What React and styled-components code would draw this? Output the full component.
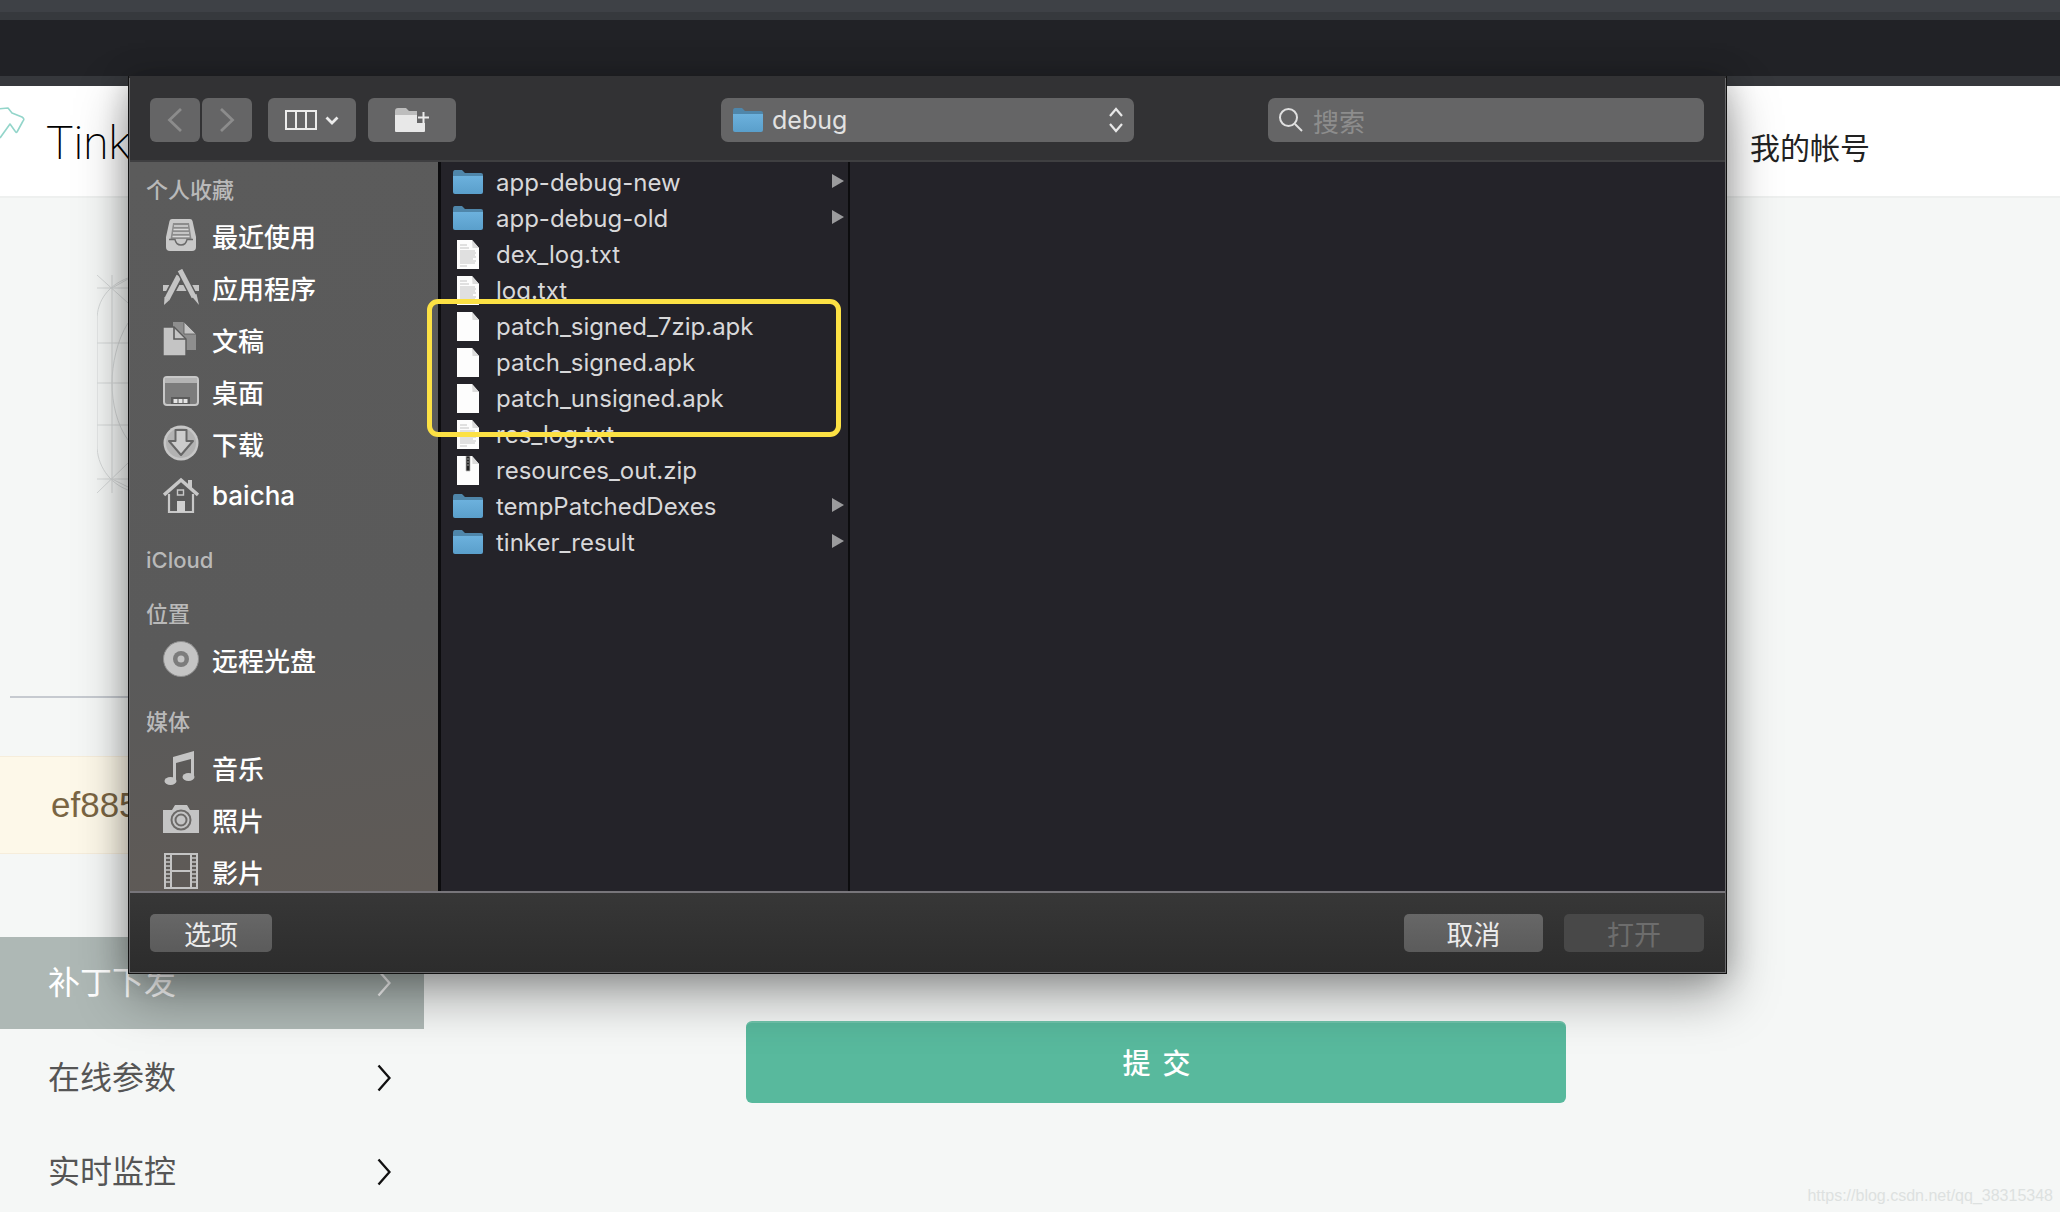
import React from 'react'
import styled, { createGlobalStyle } from 'styled-components'

const Global = createGlobalStyle`
  html, body {
    margin: 0;
    height: 100%;
    overflow: hidden;
    background: #f5f7f6;
  }
  * {
    box-sizing: border-box;
  }
`

const Page = styled.div`
  position: relative;
  width: 2060px;
  height: 1212px;
  overflow: hidden;
  background: #f5f7f6;
  font-family: 'Inter', 'Noto Sans CJK SC', sans-serif;
`

const TopStrip = styled.div`
  height: ${p => p.$h}px;
  background: ${p => p.$bg};
`

const Header = styled.header`
  height: 112px;
  background: #fff;
  border-bottom: 2px solid #eef0ef;
  display: flex;
  align-items: center;
  justify-content: space-between;
  padding: 0 190px 0 0;
`

const Brand = styled.div`
  display: flex;
  align-items: center;
  gap: 20px;
`

const LogoMark = styled.svg`
  margin-bottom: 34px;
`

const BrandName = styled.span`
  margin-top: 3px;
  font-family: 'Roboto', sans-serif;
  font-weight: 200;
  font-size: 46px;
  color: #000;
`

const Account = styled.span`
  margin-top: 9px;
  font-family: 'Noto Sans CJK SC', sans-serif;
  font-size: 30px;
  color: #222;
`

const Hero = styled.section`
  height: 498px;
  padding: 77px 0 0 97px;
`

const Divider = styled.div`
  height: 2px;
  width: 1000px;
  margin-left: 10px;
  background: #c6cad0;
`

const Notice = styled.div`
  margin-top: 58px;
  width: 1500px;
  height: 98px;
  padding-left: 51px;
  display: flex;
  align-items: center;
  background: #fdf8e9;
  border: 1px solid #f6eddb;
  border-left: none;
  font-family: 'Liberation Sans', sans-serif;
  font-size: 35px;
  color: #7a6543;
`

const Lower = styled.div`
  margin-top: 83px;
  display: grid;
  grid-template-columns: 424px 1fr;
`

const NavItem = styled.div`
  height: ${p => (p.$active ? 92 : 94)}px;
  margin-bottom: ${p => (p.$active ? 2 : 0)}px;
  padding: 0 33px 0 48px;
  display: flex;
  align-items: center;
  justify-content: space-between;
  background: ${p => (p.$active ? '#aeb8b5' : 'transparent')};
  color: ${p => (p.$active ? '#fff' : '#555')};
  font-family: 'Noto Sans CJK SC', sans-serif;
  font-size: 32px;
`

const NavLabel = styled.span`
  margin-top: -6px;
`

const Submit = styled.button`
  display: block;
  margin: 84px 0 0 322px;
  width: 820px;
  height: 82px;
  padding: 0 0 2px 13px;
  border: none;
  border-top: 2px solid #6fc4ab;
  border-radius: 6px;
  background: #58b99d;
  color: #fff;
  font-family: 'Noto Sans CJK SC', sans-serif;
  font-size: 28px;
  font-weight: 500;
  letter-spacing: 12px;
`

const Watermark = styled.span`
  position: absolute;
  right: 7px;
  bottom: 7px;
  font-family: 'Liberation Sans', sans-serif;
  font-size: 16px;
  color: #dde1e0;
`

const Dialog = styled.div`
  position: absolute;
  left: 128px;
  top: 76px;
  width: 1599px;
  height: 898px;
  display: flex;
  flex-direction: column;
  border: 1px solid #111;
  border-top: none;
  background: #323234;
  box-shadow: 0 22px 48px rgba(0, 0, 0, 0.36), 0 0 28px rgba(0, 0, 0, 0.2);

  &::after {
    content: '';
    position: absolute;
    inset: 2px 0 0 0;
    border: 1px solid #69696b;
    border-top: none;
    pointer-events: none;
  }
`

const Toolbar = styled.div`
  height: 86px;
  flex: none;
  padding: 4px 0 0 21px;
  display: flex;
  align-items: center;
  background: #323234;
  border-bottom: 2px solid #3f3f41;
`

const ToolButton = styled.div`
  width: ${p => p.$w}px;
  height: 44px;
  margin-left: ${p => p.$ml || 0}px;
  flex: none;
  display: flex;
  align-items: center;
  justify-content: center;
  gap: 8px;
  border-radius: 6px;
  background: #656566;
`

const PathPopup = styled.div`
  width: 413px;
  height: 44px;
  margin-left: 265px;
  padding: 0 10px 0 12px;
  display: flex;
  align-items: center;
  gap: 9px;
  border-radius: 7px;
  background: #656566;
  color: #e2e2e2;
  font-size: 25px;
`

const PathName = styled.span`
  flex: 1;
`

const SearchBox = styled.div`
  width: 436px;
  height: 44px;
  margin-left: 134px;
  padding: 0 10px;
  display: flex;
  align-items: center;
  gap: 9px;
  border-radius: 7px;
  background: #656566;
  color: #8d8d8d;
  font-family: 'Noto Sans CJK SC', sans-serif;
  font-size: 26px;
`

const Browser = styled.div`
  flex: 1;
  min-height: 0;
  display: flex;
`

const Sidebar = styled.aside`
  width: 309px;
  flex: none;
  padding: 15px 0 0 17px;
  overflow: hidden;
  background: linear-gradient(172deg, #5b5b5b 0%, #5a5a5a 66%, #5f5a56 100%);
`

const SideHeading = styled.div`
  height: 26px;
  line-height: 26px;
  margin-top: ${p => p.$top || 0}px;
  margin-bottom: ${p => p.$bottom ?? 6}px;
  font-family: 'Inter', 'Noto Sans CJK SC', sans-serif;
  font-size: 22px;
  font-weight: 500;
  color: #b9b9b9;
`

const SideItem = styled.div`
  height: 52px;
  display: flex;
  align-items: center;
  gap: 13px;
  padding-left: 17px;
  font-family: 'Inter', 'Noto Sans CJK SC', sans-serif;
  font-size: 26px;
  font-weight: 500;
  color: #fff;
`

const SideGlyph = styled.svg`
  flex: none;
`

const FileColumn = styled.div`
  width: 412px;
  flex: none;
  padding: 2px 0 0 12px;
  background: #242329;
  border-left: 3px solid #0c0c0e;
  border-right: 2px solid #0c0c0e;
`

const FileRow = styled.div`
  height: 36px;
  display: flex;
  align-items: center;
  gap: 13px;
  padding-right: 4px;
  font-size: 24px;
  color: #d8d8da;
`

const FileIconSlot = styled.span`
  width: 30px;
  flex: none;
  display: flex;
  justify-content: center;
`

const FileName = styled.span`
  flex: 1;
`

const Arrow = styled.span`
  width: 0;
  height: 0;
  border-left: 12px solid #9b9b9d;
  border-top: 7px solid transparent;
  border-bottom: 7px solid transparent;
  margin-top: -2px;
`

const EmptyColumn = styled.div`
  flex: 1;
  background: #242329;
`

const Footer = styled.div`
  height: 82px;
  flex: none;
  padding: 21px 22px 0 21px;
  display: flex;
  align-items: flex-start;
  gap: 21px;
  border-top: 2px solid #77757a;
  background: linear-gradient(#373737, #2c2c2c);
`

const FootButton = styled.div`
  width: ${p => p.$w}px;
  height: 38px;
  margin-right: ${p => (p.$push ? 'auto' : '0')};
  display: flex;
  align-items: center;
  justify-content: center;
  border-radius: 5px;
  background: ${p => (p.$disabled ? '#484848' : 'linear-gradient(#676767, #5b5b5b)')};
  color: ${p => (p.$disabled ? '#6d6d6d' : '#ececec')};
  font-family: 'Noto Sans CJK SC', sans-serif;
  font-size: 27px;
`

const Annotation = styled.div`
  position: absolute;
  left: 298px;
  top: 223px;
  width: 414px;
  height: 138px;
  border: 5px solid #fce144;
  border-radius: 11px;
`

const Chevron = ({ color = '#111' }) => (
  <svg width="14" height="28" viewBox="0 0 14 28" fill="none">
    <path d="M1.5 1.5 L12.5 14 L1.5 26.5" stroke={color} strokeWidth="2.4" />
  </svg>
)

const ToolChevron = ({ left }) => (
  <svg width="16" height="26" viewBox="0 0 16 26" fill="none">
    <path d={left ? 'M14 2 L2.5 13 L14 24' : 'M2 2 L13.5 13 L2 24'} stroke="#8c8c8c" strokeWidth="2.8" />
  </svg>
)

const Logo = () => (
  <LogoMark width="26" height="34" viewBox="0 0 26 34" fill="none">
    <path
      d="M-2 2 L8 1 L12 6 L22 10 Q25 12 23 14 L17 25 Q16 26 15 24 L10 17 L0 31"
      stroke="#93d5ca"
      strokeWidth="1.6"
      strokeLinejoin="round"
    />
  </LogoMark>
)

const Sketch = () => (
  <svg width="31" height="222" viewBox="0 0 31 222" fill="none" stroke="#d6d9d9" strokeWidth="1">
    <path d="M0 13 H31 M0 68 H31 M0 108 H31 M0 150 H31 M0 204 H31" />
    <path d="M15 0 V218" />
    <path d="M0 0 L31 28 M15 13 L31 4 M0 218 L31 188 M15 204 L31 212" />
    <path d="M31 3 C12 10 0 25 0 45 V170 C0 190 12 208 31 215" />
    <path d="M31 48 C20 65 15 90 15 108 C15 128 20 150 31 165" />
  </svg>
)

const ViewIcon = () => (
  <svg width="32" height="20" viewBox="0 0 32 20" fill="none" stroke="#ececec" strokeWidth="2">
    <rect x="1" y="1" width="30" height="18" />
    <path d="M11 1 V19 M21 1 V19" />
  </svg>
)

const SmallDown = () => (
  <svg width="14" height="9" viewBox="0 0 14 9" fill="none">
    <path d="M1.5 1.5 L7 7 L12.5 1.5" stroke="#ececec" strokeWidth="2.8" />
  </svg>
)

const NewFolderIcon = () => (
  <svg width="34" height="24" viewBox="0 0 34 24">
    <path d="M0 3 Q0 0 3 0 H11 L14 3 H30 V7 H0 Z" fill="#bdbdbd" />
    <path d="M0 7 H30 V23 Q30 24 29 24 H1 Q0 24 0 23 Z" fill="#e8e8e8" />
    <path d="M22 2 H34 V15 H22 Z" fill="#656566" />
    <path d="M27.5 4 H29.5 V8.5 H34 V10.5 H29.5 V15 H27.5 V10.5 H23 V8.5 H27.5 Z" fill="#ececec" />
  </svg>
)

const Folder = ({ w = 30, h = 24 }) => (
  <svg width={w} height={h} viewBox="0 0 30 24">
    <defs>
      <linearGradient id="folderFace" x1="0" y1="0" x2="0" y2="1">
        <stop offset="0" stopColor="#6cb1dd" />
        <stop offset="1" stopColor="#5a9fcb" />
      </linearGradient>
    </defs>
    <path d="M0 3 Q0 0 2 0 H9 L12 3 H28 Q30 3 30 5 V7 H0 Z" fill="#4f86aa" />
    <path d="M0 6 H30 V22 Q30 24 28 24 H2 Q0 24 0 22 Z" fill="url(#folderFace)" />
  </svg>
)

const Doc = ({ kind }) => (
  <svg width="22" height="29" viewBox="0 0 22 29">
    <path d="M0 0 H15 L22 8 V29 H0 Z" fill="#fdfdfd" />
    <path d="M15 0 L22 8 H15.5 Z" fill="#dcdcdc" />
    {kind === 'text' && (
      <path
        d="M3 5 H10 M3 8 H12 M3 11 H18 M3 13 H19 M3 15 H18 M3 17 H19 M3 19 H16 M3 21 H19 M3 23 H18 M3 26 H10"
        stroke="#b4b4b4"
        strokeWidth="0.8"
      />
    )}
    {kind === 'zip' && (
      <path d="M9 0 H13 V15 H9 Z M10 3 H12 M10 6 H12 M10 9 H12" fill="#222" stroke="#bbb" strokeWidth="0.8" />
    )}
  </svg>
)

const Updown = () => (
  <svg width="16" height="26" viewBox="0 0 16 26" fill="none" stroke="#e8e8e8" strokeWidth="2.2">
    <path d="M2 9 L8 2 L14 9 M2 17 L8 24 L14 17" />
  </svg>
)

const SearchIcon = () => (
  <svg width="26" height="26" viewBox="0 0 26 26" fill="none" stroke="#e0e0e0" strokeWidth="2">
    <circle cx="10.5" cy="10.5" r="8.5" />
    <path d="M17 17 L24 24" />
  </svg>
)

const sideIcons = {
  recent: (
    <>
      <path d="M9 2 H27 Q29 2 29.5 4 L33 20 V30 Q33 34 29 34 H7 Q3 34 3 30 V20 L6.5 4 Q7 2 9 2 Z" fill="#c8c8c8" />
      <path d="M10 6 H26 L28.5 22 H7.5 Z" fill="#8c8c8c" />
      <path d="M11 9 H25 M10.5 12.5 H25.5 M10 16 H26 M9.5 19.5 H26.5" stroke="#d8d8d8" strokeWidth="1.6" />
      <path d="M6 22.5 H12 Q13 28 18 28 Q23 28 24 22.5 H30" fill="none" stroke="#6a6a6a" strokeWidth="1.4" />
    </>
  ),
  apps: (
    <>
      <path d="M0 16 H36 V22 H0 Z" fill="#c4c4c4" />
      <path d="M16 7 L4 30" stroke="#5a5a5a" strokeWidth="9" />
      <path d="M16 7 L4 30" stroke="#c4c4c4" strokeWidth="5.5" />
      <path d="M1.5 28 L6.5 31 L1 36 Z" fill="#c4c4c4" />
      <path d="M17 1 L31 28" stroke="#5a5a5a" strokeWidth="8" />
      <path d="M17 1 L31 28" stroke="#c4c4c4" strokeWidth="5" />
      <path d="M28.5 27 L33.5 25 L36 36 Z" fill="#c4c4c4" />
    </>
  ),
  docs: (
    <>
      <path d="M10 1 H21 L33 13 V29 H10 Z" fill="#8e8e8e" />
      <path d="M21 1 L33 13 H21 Z" fill="#c4c4c4" stroke="#5a5a5a" strokeWidth="0.8" />
      <path d="M0 6 H11 L23 18 V35 H0 Z" fill="#c4c4c4" stroke="#5a5a5a" strokeWidth="1.4" />
      <path d="M11 6 V18 H23" fill="none" stroke="#5a5a5a" strokeWidth="1.6" />
    </>
  ),
  desktop: (
    <>
      <rect x="1" y="4" width="34" height="28" rx="3" fill="#7c7c7c" stroke="#c8c8c8" strokeWidth="2" />
      <path d="M2 5 H34 V10 H2 Z" fill="#b4b4b4" />
      <path d="M8 24 H27 V31 H8 Z" fill="#5c5c5c" />
      <path d="M10.5 26 H14.5 V30 H10.5 Z M15.5 26 H19.5 V30 H15.5 Z M20.5 26 H24.5 V30 H20.5 Z" fill="#e4e4e4" />
    </>
  ),
  download: (
    <>
      <circle cx="18" cy="18" r="17.5" fill="#c6c6c6" />
      <circle cx="18" cy="18" r="15" fill="#b2b2b2" />
      <path d="M12.5 5 H23.5 V16 H30 L18 30 L6 16 H12.5 Z" fill="#cccccc" stroke="#666" strokeWidth="2" strokeLinejoin="round" />
    </>
  ),
  home: (
    <>
      <path d="M1 18 L18 3 L35 18" fill="none" stroke="#c8c8c8" strokeWidth="3.4" />
      <path d="M25 3 H29 V12 L25 8 Z" fill="#c8c8c8" />
      <path d="M6 17 V35 H30 V17" fill="none" stroke="#c8c8c8" strokeWidth="2.2" />
      <path d="M14.5 13 H20.5 V18 H14.5 Z" fill="none" stroke="#c8c8c8" strokeWidth="1.4" />
      <path d="M14 24 H22 V35 H14 Z" fill="#d0d0d0" />
    </>
  ),
  disc: (
    <>
      <circle cx="18" cy="18" r="17.5" fill="#c4c4c4" stroke="#8e8e8e" />
      <circle cx="18" cy="18" r="8" fill="#7c7c7c" />
      <circle cx="18" cy="18" r="3.5" fill="#c4c4c4" />
    </>
  ),
  music: (
    <>
      <path d="M10 8 L31 2 V28 H28 V10 L13 14 V32 H10 Z" fill="#c4c4c4" />
      <ellipse cx="7.5" cy="32" rx="6" ry="4" fill="#c4c4c4" />
      <ellipse cx="25.5" cy="28" rx="6" ry="4" fill="#c4c4c4" />
    </>
  ),
  photo: (
    <>
      <path d="M0 9 H9 L12 4 H24 L27 9 H36 V32 H0 Z" fill="#c4c4c4" />
      <circle cx="18" cy="19" r="9.5" fill="none" stroke="#6c6a68" strokeWidth="2" />
      <circle cx="18" cy="19" r="5.5" fill="none" stroke="#6c6a68" strokeWidth="2" />
    </>
  ),
  movie: (
    <>
      <rect x="2" y="1" width="32" height="34" fill="none" stroke="#c4c4c4" strokeWidth="2" />
      <path d="M8 1 V35 M28 1 V35 M8 18 H28" stroke="#c4c4c4" strokeWidth="2" />
      <path d="M2 5 H8 M2 9 H8 M2 13 H8 M2 17 H8 M2 21 H8 M2 25 H8 M2 29 H8 M28 5 H34 M28 9 H34 M28 13 H34 M28 17 H34 M28 21 H34 M28 25 H34 M28 29 H34" stroke="#c4c4c4" strokeWidth="1.4" />
    </>
  ),
}

const SideIcon = ({ name }) => (
  <SideGlyph width="36" height="36" viewBox="0 0 36 36" fill="none">
    {sideIcons[name]}
  </SideGlyph>
)

const files = [
  { name: 'app-debug-new', dir: true },
  { name: 'app-debug-old', dir: true },
  { name: 'dex_log.txt', kind: 'text' },
  { name: 'log.txt', kind: 'text' },
  { name: 'patch_signed_7zip.apk' },
  { name: 'patch_signed.apk' },
  { name: 'patch_unsigned.apk' },
  { name: 'res_log.txt', kind: 'text' },
  { name: 'resources_out.zip', kind: 'zip' },
  { name: 'tempPatchedDexes', dir: true },
  { name: 'tinker_result', dir: true },
]

export default function App() {
  return (
    <Page>
      <Global />
      <TopStrip $h={12} $bg="#3e4146" />
      <TopStrip $h={8} $bg="#36393d" />
      <TopStrip $h={56} $bg="#212226" />
      <TopStrip $h={10} $bg="#36383c" />
      <Header>
        <Brand>
          <Logo />
          <BrandName>Tinker</BrandName>
        </Brand>
        <Account>我的帐号</Account>
      </Header>
      <Hero>
        <Sketch />
      </Hero>
      <Divider />
      <Notice>ef885e2</Notice>
      <Lower>
        <nav>
          <NavItem $active><NavLabel>补丁下发</NavLabel><Chevron color="#fff" /></NavItem>
          <NavItem><NavLabel>在线参数</NavLabel><Chevron /></NavItem>
          <NavItem><NavLabel>实时监控</NavLabel><Chevron /></NavItem>
        </nav>
        <main>
          <Submit>提交</Submit>
        </main>
      </Lower>
      <Watermark>https://blog.csdn.net/qq_38315348</Watermark>

      <Dialog>
        <Toolbar>
          <ToolButton $w={50}><ToolChevron left /></ToolButton>
          <ToolButton $w={50} $ml={2}><ToolChevron /></ToolButton>
          <ToolButton $w={88} $ml={16}><ViewIcon /><SmallDown /></ToolButton>
          <ToolButton $w={88} $ml={12}><NewFolderIcon /></ToolButton>
          <PathPopup>
            <Folder />
            <PathName>debug</PathName>
            <Updown />
          </PathPopup>
          <SearchBox>
            <SearchIcon />
            搜索
          </SearchBox>
        </Toolbar>
        <Browser>
          <Sidebar>
            <SideHeading>个人收藏</SideHeading>
            <SideItem><SideIcon name="recent" />最近使用</SideItem>
            <SideItem><SideIcon name="apps" />应用程序</SideItem>
            <SideItem><SideIcon name="docs" />文稿</SideItem>
            <SideItem><SideIcon name="desktop" />桌面</SideItem>
            <SideItem><SideIcon name="download" />下载</SideItem>
            <SideItem><SideIcon name="home" />baicha</SideItem>
            <SideHeading $top={26} $bottom={0}>iCloud</SideHeading>
            <SideHeading $top={28} $bottom={6}>位置</SideHeading>
            <SideItem><SideIcon name="disc" />远程光盘</SideItem>
            <SideHeading $top={24}>媒体</SideHeading>
            <SideItem><SideIcon name="music" />音乐</SideItem>
            <SideItem><SideIcon name="photo" />照片</SideItem>
            <SideItem><SideIcon name="movie" />影片</SideItem>
          </Sidebar>
          <FileColumn>
            {files.map(f => (
              <FileRow key={f.name}>
                <FileIconSlot>{f.dir ? <Folder /> : <Doc kind={f.kind} />}</FileIconSlot>
                <FileName>{f.name}</FileName>
                {f.dir && <Arrow />}
              </FileRow>
            ))}
          </FileColumn>
          <EmptyColumn />
        </Browser>
        <Footer>
          <FootButton $w={122} $push>选项</FootButton>
          <FootButton $w={139}>取消</FootButton>
          <FootButton $w={140} $disabled>打开</FootButton>
        </Footer>
        <Annotation />
      </Dialog>
    </Page>
  )
}
